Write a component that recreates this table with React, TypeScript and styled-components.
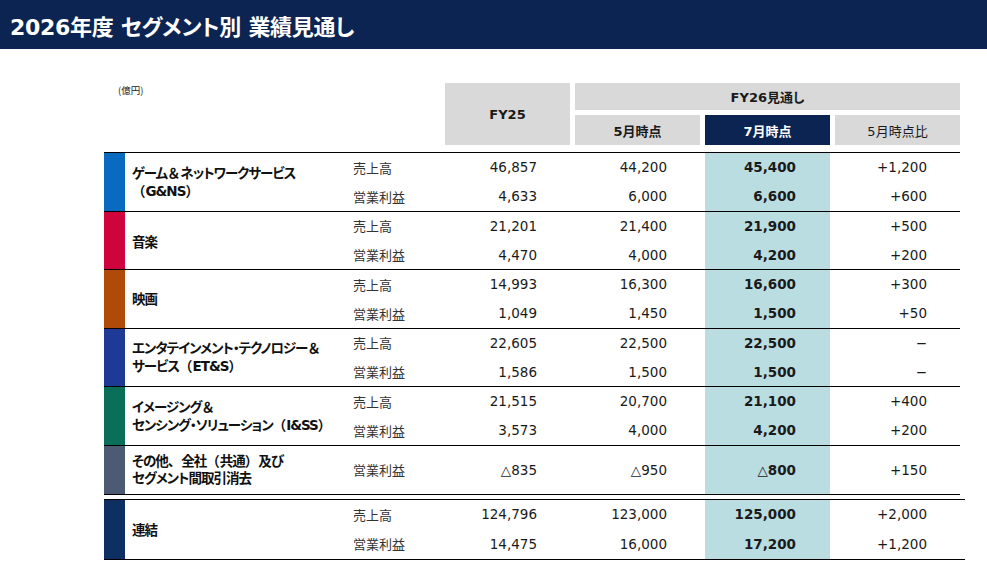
import React from "react";
import styled, { createGlobalStyle } from "styled-components";

const GlobalStyle = createGlobalStyle`
  html, body { margin: 0; padding: 0; background: #ffffff; }
  body {
    font-family: "DejaVu Sans", "Noto Sans CJK JP", sans-serif;
    color: #1a1a1a;
    font-feature-settings: "palt";
  }
`;

const COLS = "21px 228px 92px 125px 130px 130px 130px";

const Page = styled.div`
  width: 987px;
  height: 581px;
  overflow: hidden;
`;

const TitleBar = styled.header`
  height: 49px;
  background: #0c2451;
  display: flex;
  align-items: center;
  padding-left: 10px;
  color: #ffffff;
  font-weight: bold;
  font-size: 22px;
  letter-spacing: -0.3px;
`;

const Content = styled.main`
  padding: 34px 0 0 104px;
`;

const Table = styled.section`
  width: 856px;
`;

const HeadGrid = styled.div`
  display: grid;
  grid-template-columns: ${COLS};
  grid-template-rows: 27px 30px;
  row-gap: 5px;
  margin-bottom: 7px;
`;

const Unit = styled.div`
  grid-column: 1 / 4;
  grid-row: 1;
  padding: 0 0 0 14px;
  font-size: 9.5px;
  line-height: 14px;
  color: #222;
  font-family: "Noto Sans CJK JP", sans-serif;
  font-feature-settings: normal;
`;

const HeadCell = styled.div<{ $col: string; $row: string; $dark?: boolean; $bold?: boolean; $inset?: boolean }>`
  grid-column: ${(p) => p.$col};
  grid-row: ${(p) => p.$row};
  margin-left: ${(p) => (p.$inset ? "5px" : "0")};
  background: ${(p) => (p.$dark ? "#0c2451" : "#d9d9d9")};
  color: ${(p) => (p.$dark ? "#ffffff" : "#1a1a1a")};
  font-weight: ${(p) => (p.$bold ? "bold" : "normal")};
  font-size: 13px;
  display: flex;
  align-items: center;
  justify-content: center;
`;

const Body = styled.div`
  border-top: 1px solid #000;
`;

const Segment = styled.div<{ $rows: string; $gapTop?: boolean; $extend?: boolean }>`
  display: grid;
  grid-template-columns: ${COLS};
  grid-template-rows: ${(p) => p.$rows};
  border-bottom: 1px solid #000;
  ${(p) => (p.$gapTop ? "margin-top: 4px; border-top: 1px solid #000;" : "")}
  ${(p) => (p.$extend ? "width: 861px;" : "")}
`;

const Bar = styled.div<{ $color: string }>`
  grid-column: 1;
  grid-row: 1 / -1;
  background: ${(p) => p.$color};
`;

const Label = styled.div<{ $shift?: number }>`
  grid-column: 2;
  grid-row: 1 / -1;
  align-self: center;
  padding-left: 7px;
  padding-top: ${(p) => p.$shift ?? 0}px;
  font-weight: bold;
  font-size: 13.5px;
  line-height: 17px;
  letter-spacing: -1px;
  color: #111;
  white-space: nowrap;
`;

const Wide = styled.span`
  font-feature-settings: normal;
  font-family: "Noto Sans CJK JP", sans-serif;
  letter-spacing: 0;
`;

const Metric = styled.div<{ $row: number }>`
  grid-column: 3;
  grid-row: ${(p) => p.$row};
  display: flex;
  align-items: center;
  font-size: 13px;
  color: #333;
`;

const Num = styled.div<{ $col: number; $row: number; $hl?: boolean }>`
  grid-column: ${(p) => p.$col};
  grid-row: ${(p) => p.$row};
  margin-left: ${(p) => (p.$hl ? "5px" : "0")};
  background: ${(p) => (p.$hl ? "#badde2" : "transparent")};
  font-weight: ${(p) => (p.$hl ? "bold" : "normal")};
  display: flex;
  align-items: center;
  justify-content: flex-end;
  padding-right: ${(p) => (p.$hl ? "34px" : "33px")};
  font-size: 13.5px;
  color: #1a1a1a;
`;

type Line = { metric: string; v: [string, string, string, string] };
type Seg = { color: string; label: React.ReactNode; lines: Line[]; rows: string; shift?: number };

const segs: Seg[] = [
  {
    color: "#0a6ac0",
    label: (<>ゲーム<Wide>＆</Wide>ネットワークサービス<br /><Wide>（</Wide>G&amp;NS<Wide>）</Wide></>),
    rows: "28.75px 28.75px",
    lines: [
      { metric: "売上高", v: ["46,857", "44,200", "45,400", "+1,200"] },
      { metric: "営業利益", v: ["4,633", "6,000", "6,600", "+600"] },
    ],
  },
  {
    color: "#d0043c",
    label: "音楽",
    shift: 4,
    rows: "28.75px 28.75px",
    lines: [
      { metric: "売上高", v: ["21,201", "21,400", "21,900", "+500"] },
      { metric: "営業利益", v: ["4,470", "4,000", "4,200", "+200"] },
    ],
  },
  {
    color: "#b04a08",
    label: "映画",
    shift: 2,
    rows: "28.75px 28.75px",
    lines: [
      { metric: "売上高", v: ["14,993", "16,300", "16,600", "+300"] },
      { metric: "営業利益", v: ["1,049", "1,450", "1,500", "+50"] },
    ],
  },
  {
    color: "#1f3a96",
    label: (<>エンタテインメント・テクノロジー<Wide>＆</Wide><br />サービス<Wide>（</Wide>ET&amp;S<Wide>）</Wide></>),
    rows: "28.75px 28.75px",
    lines: [
      { metric: "売上高", v: ["22,605", "22,500", "22,500", "−"] },
      { metric: "営業利益", v: ["1,586", "1,500", "1,500", "−"] },
    ],
  },
  {
    color: "#0a6e58",
    label: (<>イメージング<Wide>＆</Wide><br />センシング・ソリューション<Wide>（</Wide>I&amp;SS<Wide>）</Wide></>),
    rows: "28.75px 28.75px",
    lines: [
      { metric: "売上高", v: ["21,515", "20,700", "21,100", "+400"] },
      { metric: "営業利益", v: ["3,573", "4,000", "4,200", "+200"] },
    ],
  },
  {
    color: "#4d5a73",
    label: (<>その他<Wide>、</Wide>全社<Wide>（</Wide>共通<Wide>）</Wide>及び<br />セグメント間取引消去</>),
    rows: "48px",
    lines: [{ metric: "営業利益", v: ["△835", "△950", "△800", "+150"] }],
  },
];

const total: Seg = {
  color: "#0e2f62",
  label: "連結",
  shift: 2,
  rows: "29.5px 29.5px",
  lines: [
    { metric: "売上高", v: ["124,796", "123,000", "125,000", "+2,000"] },
    { metric: "営業利益", v: ["14,475", "16,000", "17,200", "+1,200"] },
  ],
};

const SegmentBlock: React.FC<{ seg: Seg; gapTop?: boolean; extend?: boolean }> = ({ seg, gapTop, extend }) => (
  <Segment $rows={seg.rows} $gapTop={gapTop} $extend={extend}>
    <Bar $color={seg.color} />
    <Label $shift={seg.shift}>{seg.label}</Label>
    {seg.lines.map((l, i) => (
      <React.Fragment key={i}>
        <Metric $row={i + 1}>{l.metric}</Metric>
        <Num $col={4} $row={i + 1}>{l.v[0]}</Num>
        <Num $col={5} $row={i + 1}>{l.v[1]}</Num>
        <Num $col={6} $row={i + 1} $hl>{l.v[2]}</Num>
        <Num $col={7} $row={i + 1}>{l.v[3]}</Num>
      </React.Fragment>
    ))}
  </Segment>
);

export default function App() {
  return (
    <Page>
      <GlobalStyle />
      <TitleBar>2026年度 セグメント別 業績見通し</TitleBar>
      <Content>
        <Table>
          <HeadGrid>
            <Unit>(億円)</Unit>
            <HeadCell $col="4" $row="1 / 3" $bold>FY25</HeadCell>
            <HeadCell $col="5 / 8" $row="1" $inset $bold>FY26見通し</HeadCell>
            <HeadCell $col="5" $row="2" $inset $bold>5月時点</HeadCell>
            <HeadCell $col="6" $row="2" $inset $bold $dark>7月時点</HeadCell>
            <HeadCell $col="7" $row="2" $inset>5月時点比</HeadCell>
          </HeadGrid>
          <Body>
            {segs.map((s, i) => (
              <SegmentBlock key={i} seg={s} />
            ))}
            <SegmentBlock seg={total} gapTop extend />
          </Body>
        </Table>
      </Content>
    </Page>
  );
}
